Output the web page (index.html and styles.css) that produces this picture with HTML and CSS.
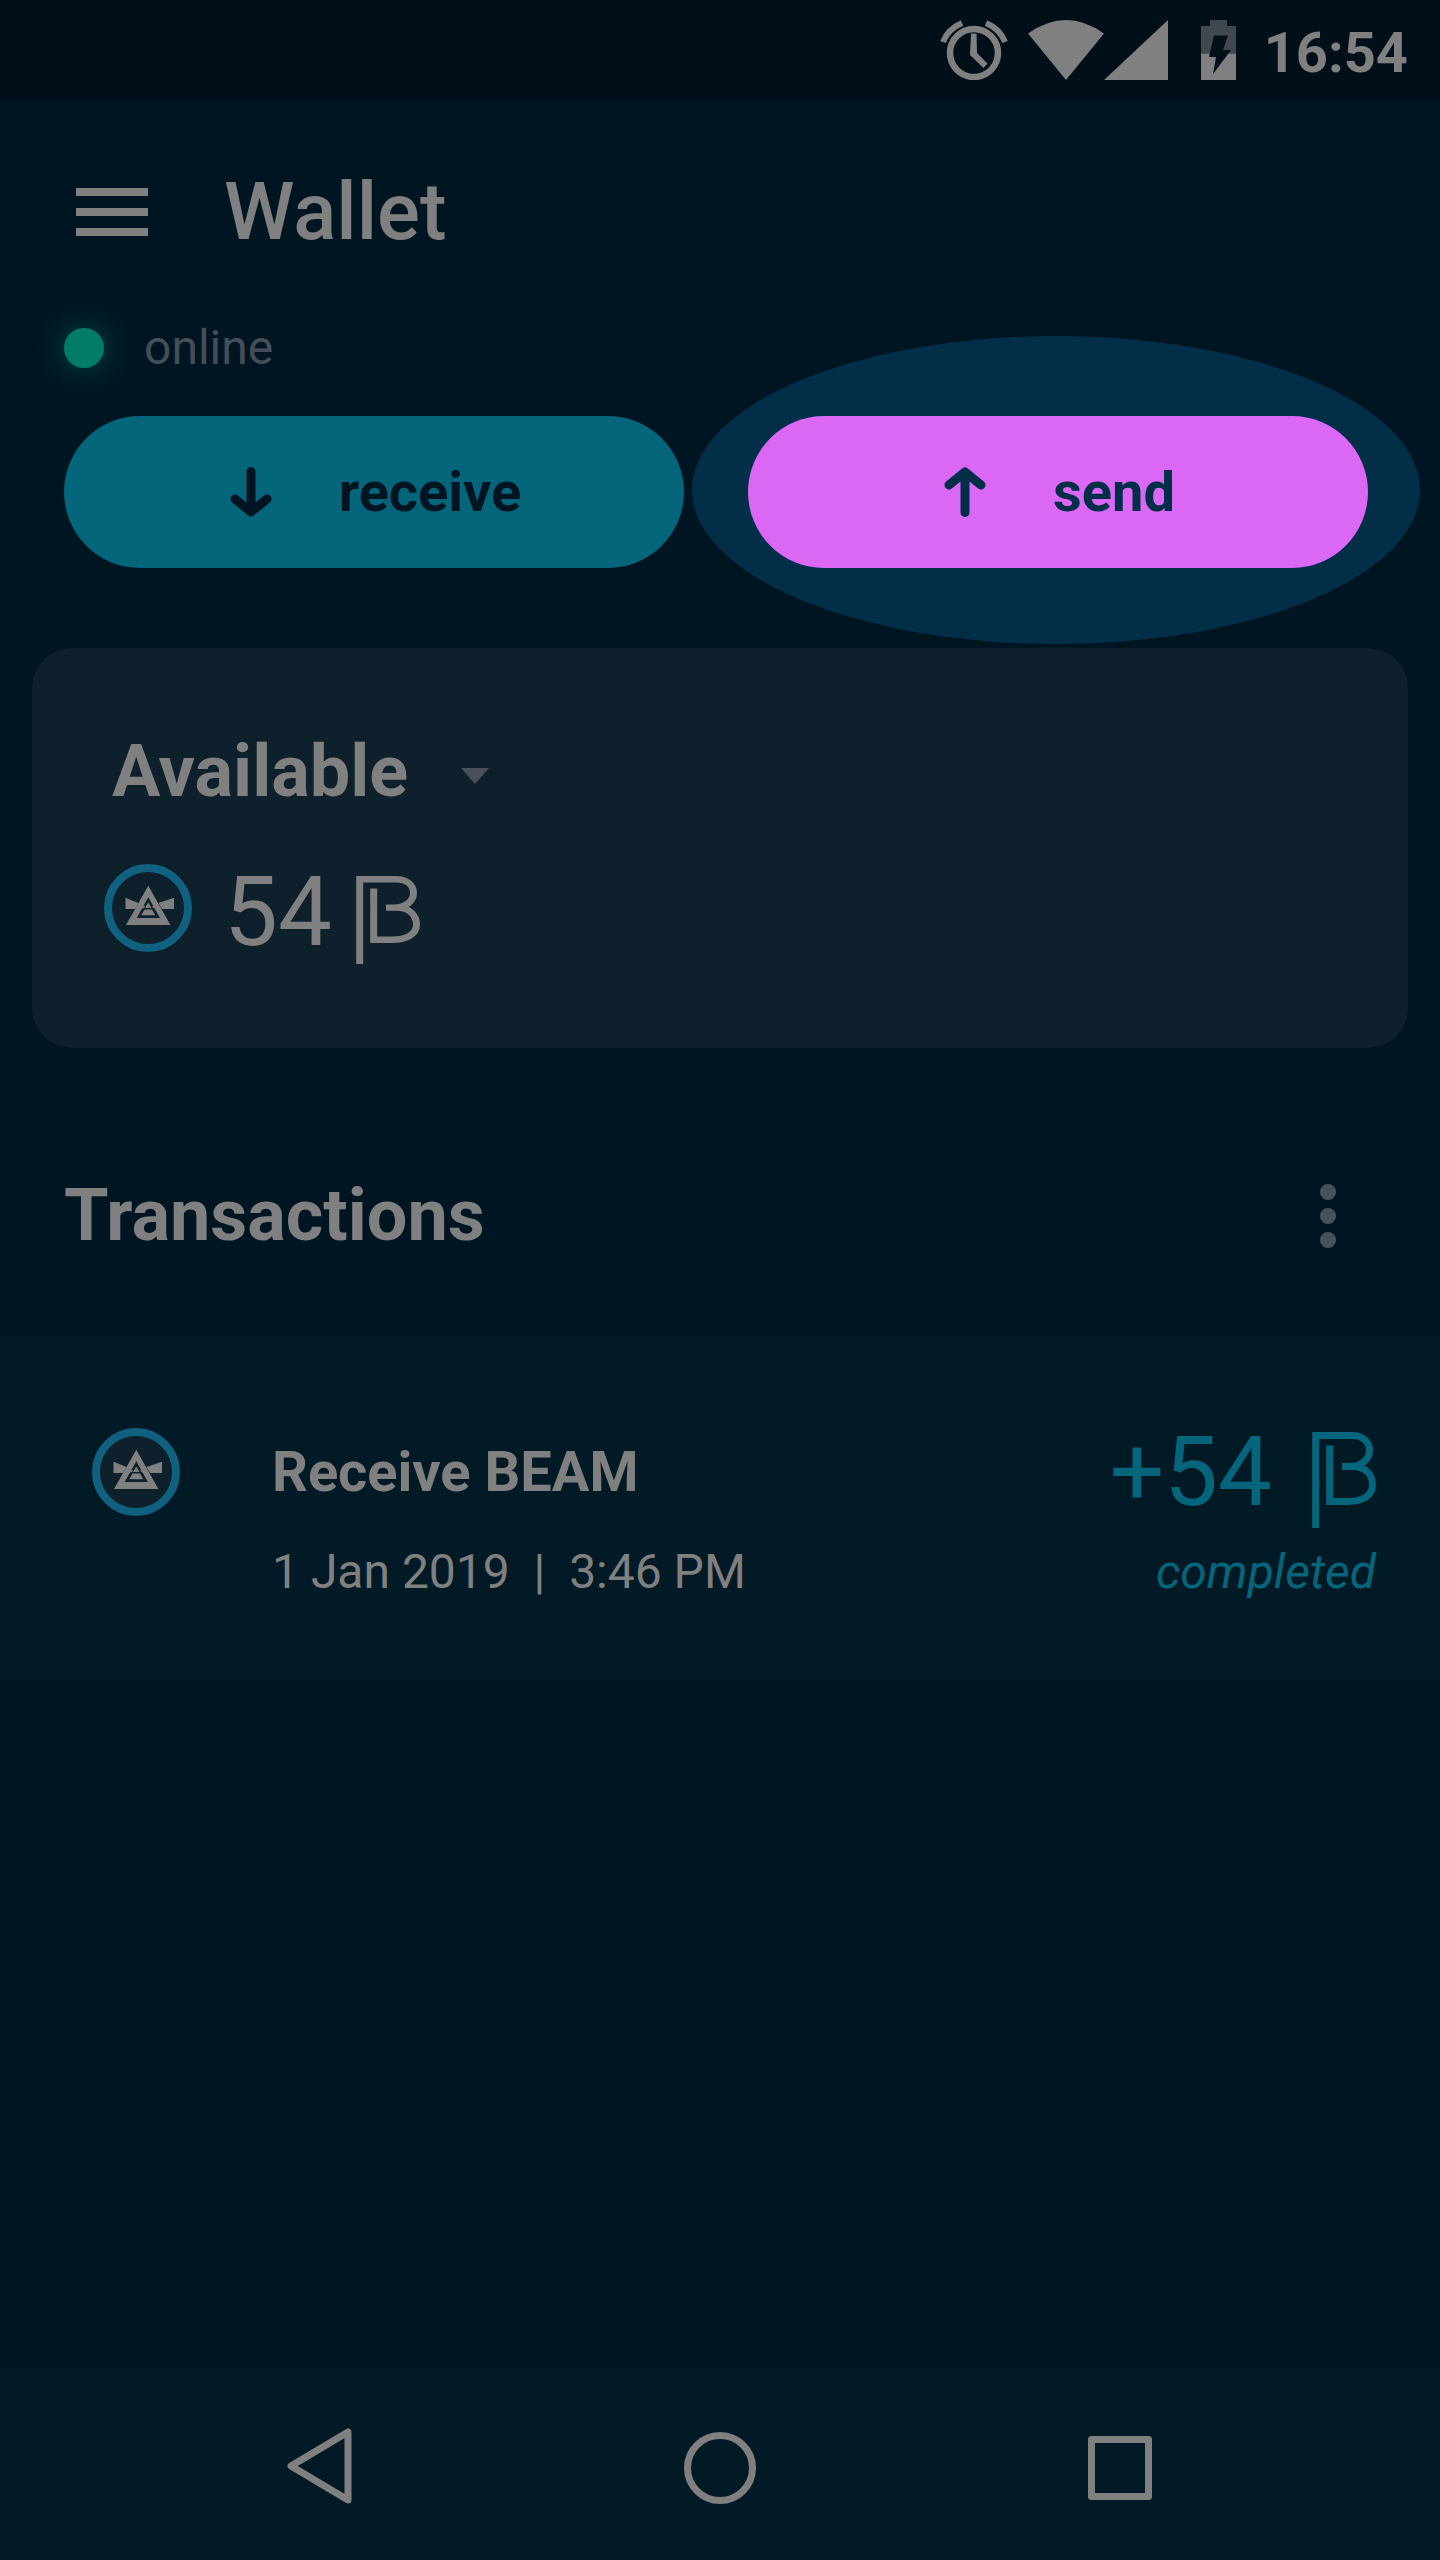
FILE: index.html
```html
<!DOCTYPE html>
<html lang="en">
<head>
  <meta charset="utf-8">
  <meta name="viewport" content="width=device-width, initial-scale=1">
  <title>Wallet</title>
  <link rel="stylesheet" href="styles.css">
</head>
<body>
  <svg class="sprite" aria-hidden="true">
    <symbol id="beam-coin" viewBox="0 0 88 88">
      <circle cx="44" cy="44" r="40" fill="#0d202b" stroke="#10607f" stroke-width="8"/>
      <path fill="#808080" fill-rule="evenodd" d="M44.3 21.7 66.4 61H22ZM44.3 33.3 32.7 54H55.9Z"/>
      <path fill="#808080" d="M21.5 33.7 34.5 39 31 45H21.5ZM70 33.7 54.5 39 58 45H70Z"/>
      <path fill="#808080" d="M44.3 38.5 47.5 44H41ZM40.5 45.5H48L51.2 51.3H37.3ZM36 42.5 41 42 40 44 35.5 45ZM48 42 52.5 42.5 53.5 45 49.5 44Z"/>
    </symbol>
    <symbol id="beam-sign" viewBox="0 0 64 96" preserveAspectRatio="none">
      <path fill="none" stroke="currentColor" stroke-width="7" d="M3.7 96V3.5H40C51 3.5 57.5 10 57.5 18.5C57.5 27 50 34.5 38 34.5H30M40 34.5C54 34.5 60.5 43 60.5 53C60.5 64 50 69.5 36 69.5H17.7V13.5"/>
    </symbol>
  </svg>

  <div class="status-bar">
    <svg class="alarm-icon" viewBox="0 0 68 60" aria-label="Alarm set" role="img">
      <circle cx="34" cy="33" r="24" fill="none" stroke="#808080" stroke-width="6.5"/>
      <path fill="none" stroke="#808080" stroke-width="6" d="M3 22Q8 9 22 3M65 22Q60 9 46 3"/>
      <path fill="#808080" d="M31 13.500H36.500L37 33 47.500 43.500 43.500 48 30 35Z"/>
    </svg>
    <svg class="wifi-icon" viewBox="0 0 76 60" aria-label="Wi-Fi" role="img">
      <path fill="#808080" d="M0 13.5Q38-13.5 76 13.5L38 60Z"/>
    </svg>
    <svg class="signal-icon" viewBox="0 0 64 60" aria-label="Mobile signal" role="img">
      <path fill="#808080" d="M64 0V60H0Z"/>
    </svg>
    <svg class="battery-icon" viewBox="0 0 36 60" aria-label="Battery charging" role="img">
      <path fill="#40484e" d="M10 0H27V6H36V33.5H1V6H10Z"/>
      <path fill="#808080" d="M1 33.5H36V60H1Z"/>
      <path fill="#000f18" d="M14 15.5H28L23 30H31L13 54 16 37H9Z"/>
    </svg>
    <time class="clock">16:54</time>
  </div>

  <header class="header">
    <button class="icon-button menu-button" type="button" aria-label="Menu">
      <svg viewBox="0 0 72 48" width="72" height="48"><path fill="#808080" d="M0 0H72V8H0ZM0 20H72V28H0ZM0 40H72V48H0Z"/></svg>
    </button>
    <h1 class="header-title">Wallet</h1>
  </header>

  <main>
    <p class="connection"><span class="connection-dot"></span>online</p>

    <div class="actions">
      <button class="action receive" type="button">
        <svg viewBox="0 0 48 56" width="48" height="56" aria-hidden="true"><path d="M24 7.5V47M8 35 24 48 40 35"/></svg>
        receive
      </button>
      <div class="spotlight">
        <button class="action send" type="button">
          <svg viewBox="0 0 48 56" width="48" height="56" aria-hidden="true"><path d="M24 48.5V9M8 21 24 8 40 21"/></svg>
          send
        </button>
      </div>
    </div>

    <section class="balance">
      <div class="balance-kind">
        <select class="balance-select" aria-label="Balance type"><option>Available</option></select>
        <svg viewBox="0 0 28 24" width="28" height="24" aria-hidden="true"><path fill="#495059" d="M0 8H28L14 24Z"/></svg>
      </div>
      <div class="balance-amount">
        <svg class="coin" aria-hidden="true"><use href="#beam-coin"/></svg>
        <span class="amount">54</span>
        <svg class="sign" role="img" aria-label="BEAM"><use href="#beam-sign"/></svg>
      </div>
    </section>

    <section>
      <div class="list-header">
        <h2 class="list-title">Transactions</h2>
        <button class="icon-button more-button" type="button" aria-label="More options">
          <svg viewBox="0 0 16 64" width="16" height="64"><g fill="#485159"><circle cx="8" cy="8" r="8"/><circle cx="8" cy="32" r="8"/><circle cx="8" cy="56" r="8"/></g></svg>
        </button>
      </div>
      <ul class="transactions">
        <li class="transaction">
          <svg class="coin" aria-hidden="true"><use href="#beam-coin"/></svg>
          <div class="transaction-info">
            <h3 class="transaction-title">Receive BEAM</h3>
            <p class="transaction-date">1 Jan 2019 &nbsp;|&nbsp; 3:46 PM</p>
          </div>
          <div class="transaction-result">
            <div class="transaction-amount">
              <span class="amount">+54</span>
              <svg class="sign sign-tall" role="img" aria-label="BEAM"><use href="#beam-sign"/></svg>
            </div>
            <p class="transaction-state">completed</p>
          </div>
        </li>
      </ul>
    </section>
  </main>

  <nav class="system-nav" aria-label="System">
    <button class="icon-button" type="button" aria-label="Back">
      <svg viewBox="0 0 80 80" width="80" height="80"><path d="M68 4V72L11 38Z"/></svg>
    </button>
    <button class="icon-button" type="button" aria-label="Home">
      <svg viewBox="0 0 80 80" width="80" height="80"><circle cx="40" cy="40" r="32.5"/></svg>
    </button>
    <button class="icon-button" type="button" aria-label="Recent apps">
      <svg viewBox="0 0 80 80" width="80" height="80"><rect x="11.5" y="11.5" width="57" height="57"/></svg>
    </button>
  </nav>
</body>
</html>
```

FILE: styles.css
```css
* {
  box-sizing: border-box;
  margin: 0;
  padding: 0;
}

body {
  display: flex;
  flex-direction: column;
  min-height: 100vh;
  background: #001522;
  color: #808080;
  font-family: Roboto, "Liberation Sans", sans-serif;
  font-size: 48px;
}

svg {
  display: block;
  flex: none;
}

button,
select {
  border: 0;
  background: none;
  color: inherit;
  font: inherit;
}

.sprite {
  position: absolute;
  width: 0;
  height: 0;
}

.icon-button {
  display: flex;
  align-items: center;
  justify-content: center;
}

/* Status bar */
.status-bar {
  display: flex;
  justify-content: flex-end;
  padding: 20px 32px;
  height: 100px;
  background: #000f18;
}

.alarm-icon {
  width: 68px;
  height: 60px;
  margin-right: 20px;
}

.wifi-icon {
  width: 76px;
  height: 60px;
}

.signal-icon {
  width: 64px;
  height: 60px;
}

.battery-icon {
  width: 36px;
  height: 60px;
  margin: 0 28px 0 32px;
}

.clock {
  font-size: 56px;
  font-weight: 700;
  line-height: 66px;
}

/* Header */
.header {
  display: flex;
  align-items: center;
  gap: 76px;
  padding: 64px 76px;
}

.header-title {
  font-size: 80px;
  font-weight: 500;
  line-height: 96px;
}

.connection {
  display: flex;
  align-items: center;
  gap: 40px;
  padding: 0 64px;
  color: #444e57;
  line-height: 48px;
}

.connection-dot {
  width: 40px;
  height: 40px;
  border-radius: 50%;
  background: #007c67;
  box-shadow: 0 0 32px rgba(0, 124, 103, 0.6);
}

/* Receive and send */
.actions {
  display: grid;
  grid-template-columns: 1fr 1fr;
  gap: 64px;
  padding: 44px 72px 80px 64px;
  isolation: isolate;
}

.action {
  display: flex;
  align-items: center;
  justify-content: center;
  gap: 64px;
  width: 100%;
  height: 152px;
  border-radius: 76px;
  font-size: 56px;
  font-weight: 700;
}

.action path {
  fill: none;
  stroke: currentColor;
  stroke-width: 9;
  stroke-linecap: round;
  stroke-linejoin: round;
}

.receive {
  background: #05657b;
  color: #001522;
}

.send {
  background: #da68f5;
  color: #022e48;
}

.spotlight {
  position: relative;
}

.spotlight::before {
  content: "";
  position: absolute;
  z-index: -1;
  inset: -80px -52px -76px -56px;
  border-radius: 50%;
  background: #022e48;
}

/* Balance card */
.balance {
  margin: 0 32px;
  padding: 76px 72px 84px;
  border-radius: 40px;
  background: #0d202b;
}

.balance-kind {
  display: flex;
  align-items: center;
  gap: 52px;
  padding-left: 8px;
}

.balance-select {
  appearance: none;
  height: 96px;
  font-size: 72px;
  font-weight: 700;
  line-height: 96px;
}

.balance-amount {
  display: flex;
  margin-top: 44px;
  height: 100px;
}

.coin {
  width: 88px;
  height: 88px;
}

.balance-amount .coin {
  margin-right: 32px;
}

.amount {
  font-size: 96px;
  line-height: 96px;
}

.sign {
  align-self: flex-end;
  width: 64px;
  height: 88px;
  margin-left: 24px;
}

.sign-tall {
  height: 96px;
  margin-left: 40px;
}

/* Transactions */
.list-header {
  display: flex;
  align-items: center;
  justify-content: space-between;
  padding: 120px 88px 72px 64px;
}

.list-title {
  font-size: 72px;
  font-weight: 700;
  line-height: 96px;
}

.more-button {
  width: 48px;
  height: 96px;
}

.transactions {
  list-style: none;
}

.transaction {
  display: flex;
  padding: 80px 64px 76px 92px;
  background: #021a26;
}

.transaction .coin {
  margin: 12px 92px 0 0;
}

.transaction-info {
  flex: 1;
}

.transaction-title {
  margin-bottom: 12px;
  font-size: 56px;
  font-weight: 700;
  line-height: 112px;
}

.transaction-date,
.transaction-state {
  line-height: 64px;
}

.transaction-result {
  color: #05657b;
  text-align: right;
}

.transaction-amount {
  display: flex;
  justify-content: flex-end;
  margin-bottom: 12px;
}

.transaction-amount .amount {
  line-height: 112px;
}

.transaction-state {
  font-style: italic;
}

/* System navigation */
.system-nav {
  display: grid;
  grid-template-columns: repeat(3, 1fr);
  margin-top: auto;
  padding: 60px 120px 52px;
  background: #011a25;
}

.system-nav svg {
  fill: none;
  stroke: #808080;
  stroke-width: 7;
  stroke-linejoin: round;
}
```
